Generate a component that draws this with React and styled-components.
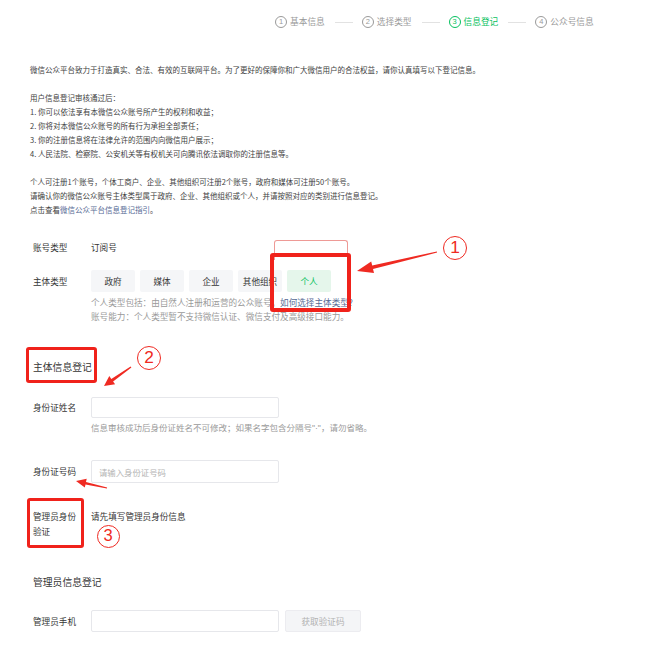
import React from "react";
import styled, { createGlobalStyle } from "styled-components";

const Global = createGlobalStyle`
  html, body { margin: 0; padding: 0; background: #fff; }
  body { font-family: "Noto Sans CJK SC", "Noto Sans", sans-serif; color: #353535; }
`;

const Page = styled.div`
  position: relative;
  width: 656px;
  height: 654px;
  overflow: hidden;
  background: #fff;
`;

const Steps = styled.div`
  display: flex;
  align-items: center;
  height: 14px;
  padding: 15px 0 0 275px;
`;

const Step = styled.div`
  display: flex;
  align-items: center;
  gap: 3px;
  font-size: 8.7px;
  line-height: 14px;
  color: ${(p) => (p.$active ? "#07c160" : "#9a9a9a")};
`;

const StepNum = styled.span`
  width: 10px;
  height: 10px;
  border: 1px solid currentColor;
  border-radius: 50%;
  display: flex;
  align-items: center;
  justify-content: center;
  font-family: "Liberation Sans", sans-serif;
  font-size: 7.5px;
  line-height: 1;
`;

const StepLine = styled.span`
  width: 18px;
  height: 1px;
  background: #e2e2e2;
  margin: 0 9px 0 10px;
`;

const Intro = styled.div`
  padding: 34px 0 0 30px;
  font-size: 7.5px;
  line-height: 14px;
  color: #3e3e3e;
`;

const Para = styled.p`
  margin: 0 0 14px;
  &:last-child { margin-bottom: 0; }
`;

const Link = styled.span`
  color: #576b95;
`;

const Quote = styled.span`
  font-family: "Liberation Sans", sans-serif;
`;

const Form = styled.div`
  padding: 19px 0 0 33px;
`;

const Row = styled.div`
  display: flex;
  align-items: ${(p) => (p.$top ? "flex-start" : "center")};
  min-height: 22px;
  margin-top: ${(p) => p.$mt || 0}px;
`;

const Label = styled.div`
  width: 50px;
  margin-right: 8px;
  flex: none;
  font-size: 8.6px;
  line-height: 15px;
  color: #353535;
`;

const Value = styled.div`
  font-size: 8.6px;
  line-height: 15px;
  color: #353535;
`;

const Chips = styled.div`
  display: flex;
  gap: 5px;
`;

const Chip = styled.div`
  width: 44px;
  height: 22px;
  border-radius: 2px;
  display: flex;
  align-items: center;
  justify-content: center;
  font-size: 8.6px;
  background: ${(p) => (p.$on ? "#e5f6eb" : "#f5f6f8")};
  color: ${(p) => (p.$on ? "#07c160" : "#353535")};
`;

const Notes = styled.div`
  margin: 3px 0 0 58px;
  font-size: 8.6px;
  line-height: 14px;
  color: #9a9a9a;
`;

const SectionTitle = styled.div`
  margin-top: ${(p) => p.$mt}px;
  font-size: 9.8px;
  line-height: 14px;
  color: #353535;
`;

const Input = styled.div`
  box-sizing: border-box;
  width: 188px;
  height: ${(p) => p.$h || 22}px;
  border: 1px solid #e6e7eb;
  border-radius: 2px;
  background: #fff;
  display: flex;
  align-items: center;
  padding-left: 7px;
  font-size: 8.4px;
  color: #b4b4b4;
`;

const Hint = styled.div`
  margin: 2px 0 0 58px;
  font-size: 8.5px;
  line-height: 14px;
  color: #9a9a9a;
`;

const GhostButton = styled.div`
  box-sizing: border-box;
  width: 76px;
  height: 22px;
  margin-left: 6px;
  border: 1px solid #ececf0;
  border-radius: 2px;
  background: #f4f5f7;
  color: #b2b2b2;
  font-size: 8.6px;
  display: flex;
  align-items: center;
  justify-content: center;
`;

/* annotation overlay */
const Mark = styled.div`
  position: absolute;
  left: ${(p) => p.$x}px;
  top: ${(p) => p.$y}px;
  width: ${(p) => p.$w}px;
  height: ${(p) => p.$h}px;
  box-sizing: border-box;
  border: ${(p) => p.$b || 4}px solid #f0221b;
  border-radius: 3px;
`;

const Ghost = styled.div`
  position: absolute;
  left: 274px;
  top: 240px;
  width: 74px;
  height: 20px;
  box-sizing: border-box;
  border: 1px solid #ee9a96;
  border-bottom: none;
  border-radius: 3px 3px 0 0;
`;

const Badge = styled.div`
  position: absolute;
  left: ${(p) => p.$x - p.$d / 2}px;
  top: ${(p) => p.$y - p.$d / 2}px;
  width: ${(p) => p.$d}px;
  height: ${(p) => p.$d}px;
  box-sizing: border-box;
  border: 1.6px solid #ef2a22;
  border-radius: 50%;
  color: #ef2a22;
  display: flex;
  align-items: center;
  justify-content: center;
  font-family: "Liberation Sans", sans-serif;
  font-size: ${(p) => p.$d * 0.72}px;
  line-height: 1;
`;

const Arrows = styled.svg`
  position: absolute;
  left: 0;
  top: 0;
  pointer-events: none;
`;

export default function App() {
  return (
    <Page>
      <Global />
      <Steps>
        <Step><StepNum>1</StepNum>基本信息</Step>
        <StepLine />
        <Step><StepNum>2</StepNum>选择类型</Step>
        <StepLine />
        <Step $active><StepNum>3</StepNum>信息登记</Step>
        <StepLine />
        <Step><StepNum>4</StepNum>公众号信息</Step>
      </Steps>

      <Intro>
        <Para>微信公众平台致力于打造真实、合法、有效的互联网平台。为了更好的保障你和广大微信用户的合法权益，请你认真填写以下登记信息。</Para>
        <Para>
          用户信息登记审核通过后：<br />
          1. 你可以依法享有本微信公众账号所产生的权利和收益；<br />
          2. 你将对本微信公众账号的所有行为承担全部责任；<br />
          3. 你的注册信息将在法律允许的范围内向微信用户展示；<br />
          4. 人民法院、检察院、公安机关等有权机关可向腾讯依法调取你的注册信息等。
        </Para>
        <Para>
          个人可注册1个账号，个体工商户、企业、其他组织可注册2个账号，政府和媒体可注册50个账号。<br />
          请确认你的微信公众账号主体类型属于政府、企业、其他组织或个人，并请按照对应的类别进行信息登记。<br />
          点击查看<Link>微信公众平台信息登记指引</Link>。
        </Para>
      </Intro>

      <Form>
        <Row>
          <Label>账号类型</Label>
          <Value>订阅号</Value>
        </Row>
        <Row $mt={12}>
          <Label>主体类型</Label>
          <Chips>
            <Chip>政府</Chip>
            <Chip>媒体</Chip>
            <Chip>企业</Chip>
            <Chip>其他组织</Chip>
            <Chip $on>个人</Chip>
          </Chips>
        </Row>
        <Notes>
          个人类型包括：由自然人注册和运营的公众账号。<Link>如何选择主体类型?</Link><br />
          账号能力：个人类型暂不支持微信认证、微信支付及高级接口能力。
        </Notes>

        <SectionTitle $mt={37}>主体信息登记</SectionTitle>
        <Row $mt={22}>
          <Label>身份证姓名</Label>
          <Input $h={21} />
        </Row>
        <Hint>信息审核成功后身份证姓名不可修改；如果名字包含分隔号<Quote>"·"</Quote>，请勿省略。</Hint>
        <Row $mt={25}>
          <Label>身份证号码</Label>
          <Input $h={23}>请输入身份证号码</Input>
        </Row>
        <Row $mt={26} $top>
          <Label>管理员身份验证</Label>
          <Value>请先填写管理员身份信息</Value>
        </Row>

        <SectionTitle $mt={36}>管理员信息登记</SectionTitle>
        <Row $mt={21}>
          <Label>管理员手机</Label>
          <Input />
          <GhostButton>获取验证码</GhostButton>
        </Row>
      </Form>

      <Ghost />
      <Mark $x={270} $y={253} $w={81} $h={59} $b={4} />
      <Mark $x={26} $y={347} $w={71} $h={36} $b={3.5} />
      <Mark $x={27} $y={498} $w={57} $h={50} $b={3.5} />

      <Badge $x={455} $y={248} $d={24}>1</Badge>
      <Badge $x={149} $y={358} $d={24}>2</Badge>
      <Badge $x={108} $y={536} $d={23}>3</Badge>

      <Arrows width="656" height="654" viewBox="0 0 656 654">
        <polygon
          fill="#ef2a22"
          points="357,271 371.2,261.5 372.2,265.5 436.9,251.4 437.1,252.6 373.0,269.1 374.0,273.1"
        />
        <polygon
          fill="#ef2a22"
          points="104,386 109.3,376.1 111.3,379.0 130.6,366.5 131.4,367.5 113.1,381.4 115.1,384.3"
        />
        <polygon
          fill="#ef2a22"
          points="76,481 86.7,478.8 86.0,481.9 107.1,487.4 106.9,488.6 85.5,484.5 84.8,487.6"
        />
      </Arrows>
    </Page>
  );
}
